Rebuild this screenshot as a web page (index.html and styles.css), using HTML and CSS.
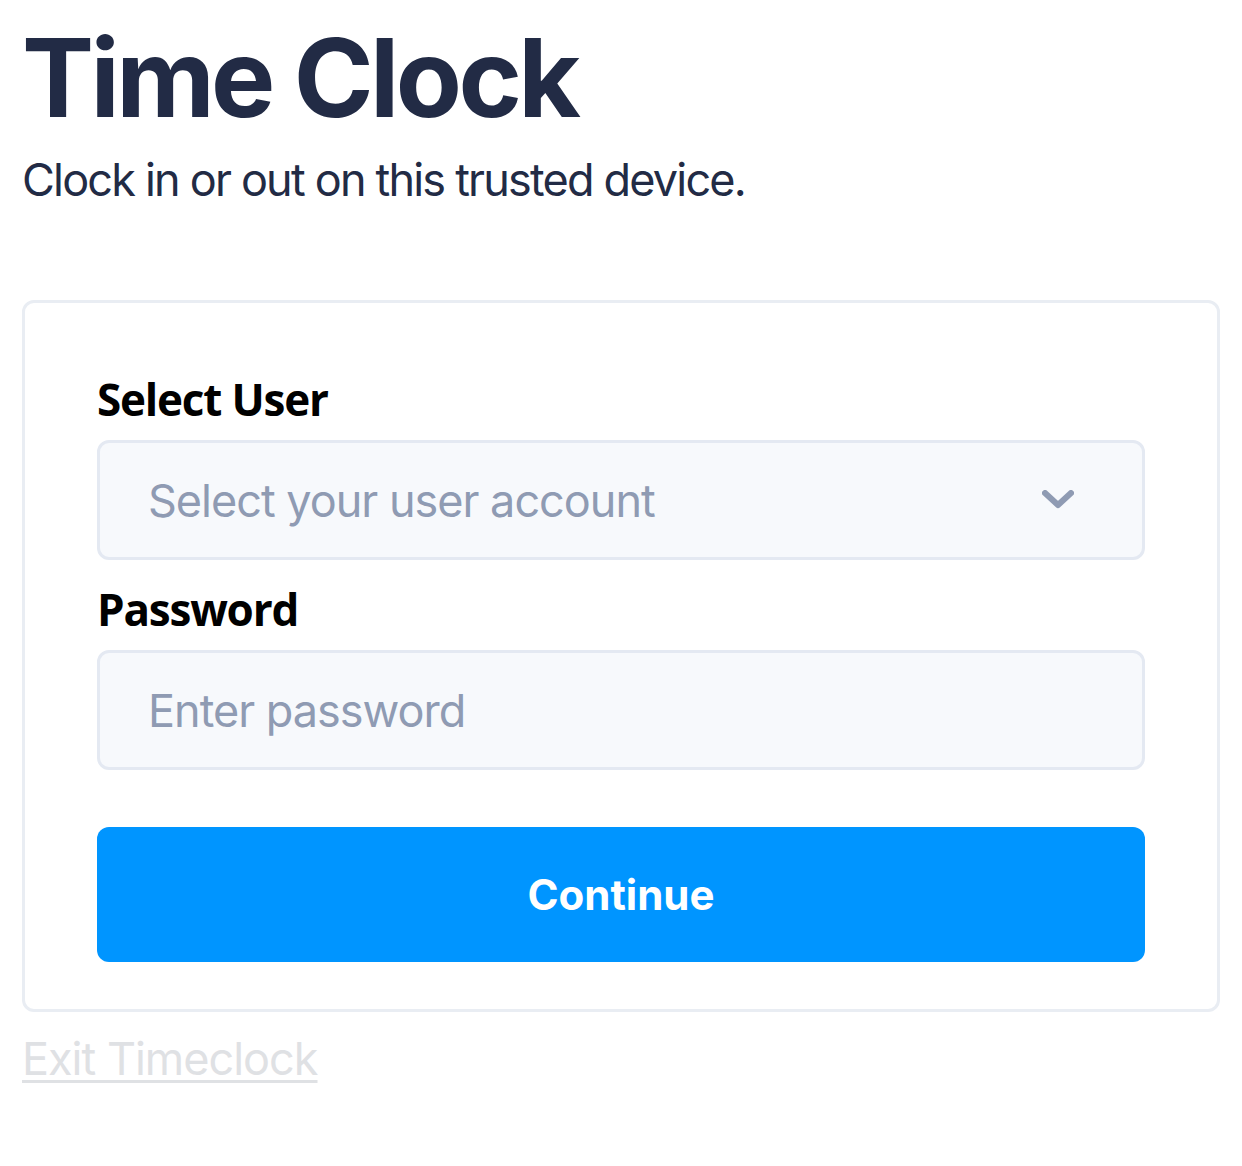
FILE: index.html
```html
<!DOCTYPE html>
<html lang="en">
<head>
<meta charset="utf-8">
<title>Time Clock</title>
<link rel="stylesheet" href="styles.css">
</head>
<body>
<main class="page">
  <h1 class="title">Time Clock</h1>
  <p class="subtitle">Clock in or out on this trusted device.</p>
  <section class="card">
    <label class="label">Select User</label>
    <div class="field select">
      <span class="placeholder">Select your user account</span>
      <svg class="chevron" viewBox="0 0 32 20" width="32" height="20" aria-hidden="true">
        <path d="M3 3 L16 15 L29 3" fill="none" stroke="#8f9bb3" stroke-width="6" stroke-linecap="round" stroke-linejoin="round"/>
      </svg>
    </div>
    <label class="label label-pw">Password</label>
    <div class="field">
      <span class="placeholder">Enter password</span>
    </div>
    <button class="btn" type="button">Continue</button>
  </section>
  <a class="exit" href="#">Exit Timeclock</a>
</main>
</body>
</html>
```

FILE: styles.css
```css
html, body {
  margin: 0;
  padding: 0;
  background: #ffffff;
}

.page {
  padding: 13px 22px 0 22px;
  display: flex;
  flex-direction: column;
  align-items: flex-start;
  font-family: Inter, "Liberation Sans", sans-serif;
}

.title {
  margin: 0;
  font-family: Inter, "Liberation Sans", sans-serif;
  font-weight: 700;
  font-size: 108px;
  line-height: 130px;
  letter-spacing: -3.6px;
  color: #222b45;
}

.subtitle {
  margin: 3px 0 0 0;
  font-size: 45px;
  line-height: 67px;
  letter-spacing: -1.8px;
  color: #222b45;
}

.card {
  align-self: stretch;
  margin-top: 87px;
  border: 3px solid #e9edf3;
  border-radius: 12px;
  padding: 65px 72px 47px 72px;
  display: flex;
  flex-direction: column;
}

.label {
  font-family: "Open Sans", "Noto Sans", sans-serif;
  font-weight: 700;
  font-size: 44px;
  line-height: 63px;
  letter-spacing: -1.2px;
  color: #000000;
  margin-bottom: 9px;
}

.label-pw {
  margin-top: 18px;
}

.field {
  height: 120px;
  box-sizing: border-box;
  border: 3px solid #e4e9f2;
  border-radius: 12px;
  background: #f7f9fc;
  padding: 0 48px;
  display: flex;
  align-items: center;
  justify-content: space-between;
}

.placeholder {
  font-size: 45px;
  letter-spacing: -1px;
  color: #8f9bb3;
}

.chevron {
  width: 32px;
  height: 20px;
  margin-right: 20px;
}

.btn {
  margin-top: 57px;
  height: 135px;
  border: none;
  border-radius: 12px;
  background: #0095ff;
  color: #ffffff;
  font-family: Inter, "Liberation Sans", sans-serif;
  font-weight: 700;
  font-size: 42px;
}

.exit {
  margin-top: 13px;
  font-size: 45px;
  line-height: 67px;
  letter-spacing: -1px;
  color: #dfe1e4;
  text-decoration: underline;
  text-decoration-thickness: 3px;
  text-underline-offset: 5px;
}
```
